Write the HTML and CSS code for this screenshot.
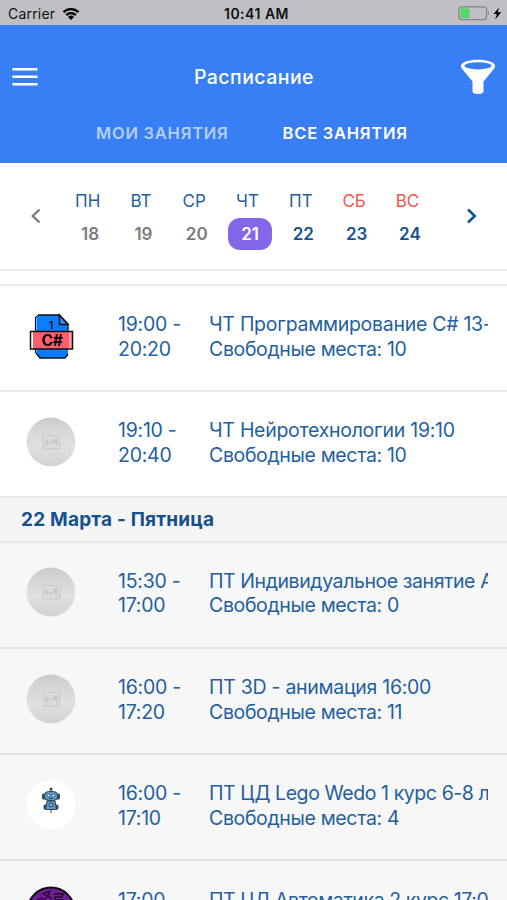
FILE: index.html
```
<!DOCTYPE html>
<html lang="ru">
<head>
    <meta charset="utf-8">
    <title>Расписание</title>
    <link rel="stylesheet" href="styles.css">
</head>
<body>
    <svg class="defs" width="0" height="0">
        <defs>
            <linearGradient id="grey" x1="0" y1="0" x2="0" y2="1">
                <stop offset="0" stop-color="#cbcbcb"/>
                <stop offset="0.25" stop-color="#d6d6d6"/>
                <stop offset="0.6" stop-color="#e0e0e0"/>
                <stop offset="1" stop-color="#d2d2d2"/>
            </linearGradient>
            <symbol id="no-photo" viewBox="0 0 50 50">
                <circle cx="25" cy="25" r="24.4" fill="url(#grey)"/>
                <rect x="17" y="18.500" width="17" height="13.500" fill="#dadada" stroke="#c9c9c9"/>
                <path d="M19.500 29.500v-8l3.500 3.500 3 .5 3-4h2.500v8l-3.500-4.500-3 2.500-2.500-2z" fill="#c6c6c6"/>
            </symbol>
        </defs>
    </svg>

    <div class="status">
        <div class="carrier">
            <span>Carrier</span>
            <svg width="18" height="14" viewBox="0 0 18 14">
                <path d="M1.500 5.200a10.800 10.800 0 0 1 15 0M4.200 8.100a6.800 6.800 0 0 1 9.600 0" fill="none" stroke="#000" stroke-width="2.300"/>
                <path d="M9 13l-3-3a4.400 4.400 0 0 1 6 0z"/>
            </svg>
        </div>
        <span class="clock">10:41 AM</span>
        <svg class="battery" width="44" height="16" viewBox="0 0 44 16">
            <rect x="0.800" y="0.800" width="27.800" height="12.800" rx="3" fill="none" stroke="#858588" stroke-width="1.300"/>
            <rect x="2.500" y="2.500" width="9" height="9.500" rx="1" fill="#4cd964"/>
            <path d="M30 5q2 2.200 0 4.400z" fill="#858588"/>
            <path d="M41 1.500l-5.500 6.500h3.300l-1.600 5.500 6-7.200h-3.500z"/>
        </svg>
    </div>

    <header class="header">
        <div class="bar">
            <svg class="burger" width="26" height="20" viewBox="0 0 26 20">
                <path d="M0.500 2.300h25M0.500 9.800h25M0.500 17.200h25" stroke="#fff" stroke-width="2.400"/>
            </svg>
            <h1>Расписание</h1>
            <svg class="funnel" width="36" height="36" viewBox="0 0 36 36">
                <path d="M1 7C1 3 8.500 0.700 18 0.700S35 3 35 7c0 1.300-.4 2-1 2.700L23.500 22.500v9.800q0 2.700-5.500 2.700t-5.500-2.700v-9.800L2 9.700C1.400 9 1 8.300 1 7z" fill="#fff"/>
                <ellipse cx="18" cy="6.800" rx="13.500" ry="3.600" fill="#387ef5"/>
            </svg>
        </div>
        <nav class="tabs">
            <a class="tab">МОИ ЗАНЯТИЯ</a>
            <a class="tab active">ВСЕ ЗАНЯТИЯ</a>
        </nav>
    </header>

    <section class="week">
        <svg class="prev" width="12" height="18" viewBox="0 0 12 18"><path d="M9.500 2.500L2.700 9l6.800 6.500" fill="none" stroke="#777" stroke-width="2.200"/></svg>
        <div class="days">
            <div class="day past"><span>ПН</span><b>18</b></div>
            <div class="day past"><span>ВТ</span><b>19</b></div>
            <div class="day past"><span>СР</span><b>20</b></div>
            <div class="day today"><span>ЧТ</span><b>21</b></div>
            <div class="day"><span>ПТ</span><b>22</b></div>
            <div class="day weekend"><span>СБ</span><b>23</b></div>
            <div class="day weekend"><span>ВС</span><b>24</b></div>
        </div>
        <svg class="next" width="12" height="18" viewBox="0 0 12 18"><path d="M2 2.500L8.800 9 2 15.500" fill="none" stroke="#16508f" stroke-width="2.500"/></svg>
    </section>

    <main class="list">
        <div class="item">
            <svg class="photo" viewBox="0 0 50 50">
                <path d="M9.500 42V6.500L12 4.500" fill="none" stroke="#111" stroke-width="1.200"/>
                <path d="M13 4h20l9 9v31l-3 3H14l-3.500-4V6z" fill="#0a7cff"/>
                <path d="M12 4h21l9 9v7M10 42l4 5h25l3-4" fill="none" stroke="#111" stroke-width="1.300"/>
                <path d="M33.500 4v9.500H42z" fill="#2b91ff" stroke="#111" stroke-width="1.500"/>
                <rect x="4.500" y="20.500" width="42" height="17.500" fill="#fff"/>
                <rect x="7" y="20.500" width="37" height="17.500" fill="#ff5f6d"/>
                <rect x="43" y="20.500" width="3.500" height="17.500" fill="#ff9aa2"/>
                <rect x="4.500" y="20.500" width="42" height="17.500" fill="none" stroke="#111" stroke-width="1.500"/>
                <text x="25" y="17.500" class="file-num">1</text>
                <text x="26" y="35" class="file-lang">C#</text>
            </svg>
            <div class="time">19:00 -<br>20:20</div>
            <div class="info"><div class="name">ЧТ Программирование C# 13-</div>Свободные места: 10</div>
        </div>
        <div class="item">
            <svg class="photo"><use href="#no-photo"/></svg>
            <div class="time">19:10 -<br>20:40</div>
            <div class="info"><div class="name">ЧТ Нейротехнологии 19:10</div>Свободные места: 10</div>
        </div>
        <h2>22 Марта - Пятница</h2>
        <div class="item grey">
            <svg class="photo"><use href="#no-photo"/></svg>
            <div class="time">15:30 -<br>17:00</div>
            <div class="info"><div class="name long">ПТ Индивидуальное занятие А</div>Свободные места: 0</div>
        </div>
        <div class="item grey">
            <svg class="photo"><use href="#no-photo"/></svg>
            <div class="time">16:00 -<br>17:20</div>
            <div class="info"><div class="name">ПТ 3D - анимация 16:00</div>Свободные места: 11</div>
        </div>
        <div class="item grey">
            <svg class="photo" viewBox="0 0 50 50">
                <circle cx="25" cy="25" r="24.500" fill="#fff"/>
                <path d="M25 8v5M25 29v4" stroke="#777" stroke-width="1.300"/>
                <circle cx="25" cy="9" r="1.500" fill="#4a4038"/>
                <rect x="16" y="13.500" width="4" height="6" rx="1.500" fill="#344b5e"/>
                <rect x="30" y="13.500" width="4" height="6" rx="1.500" fill="#344b5e"/>
                <rect x="18.500" y="11.500" width="13" height="9" rx="4" fill="#5c9cc8" stroke="#2f4558"/>
                <circle cx="22.500" cy="15.500" r="1.500" fill="#cceaff" stroke="#2f4558" stroke-width=".7"/>
                <circle cx="27.500" cy="15.500" r="1.500" fill="#cceaff" stroke="#2f4558" stroke-width=".7"/>
                <path d="M23 18.500h4" stroke="#2f4558"/>
                <rect x="17.500" y="24.500" width="4" height="5" rx="1.500" fill="#344b5e"/>
                <rect x="28.500" y="24.500" width="4" height="5" rx="1.500" fill="#344b5e"/>
                <path d="M21 21h8l1.500 8.500h-11z" fill="#5c9cc8" stroke="#2f4558"/>
                <circle cx="25" cy="25" r="2" fill="#7dbbe3" stroke="#2f4558"/>
            </svg>
            <div class="time">16:00 -<br>17:10</div>
            <div class="info"><div class="name long">ПТ ЦД Lego Wedo 1 курс 6-8 л</div>Свободные места: 4</div>
        </div>
        <div class="item grey">
            <svg class="photo" viewBox="0 0 50 50">
                <circle cx="25" cy="25" r="23.500" fill="#6f1e96" stroke="#111" stroke-width="2"/>
                <path d="M10 15l5-3 3 2 4-4-5-2 7-3-2 5 4 3M28 8h9l-1 3h-7v3h9" fill="none" stroke="#26082f" stroke-width="1.300"/>
            </svg>
            <div class="time">17:00 -<br>18:30</div>
            <div class="info"><div class="name long">ПТ ЦД Автоматика 2 курс 17:00</div>Свободные места: 5</div>
        </div>
    </main>
</body>
</html>
```

FILE: styles.css
```
* {
    box-sizing: border-box;
}

body {
    margin: 0;
    height: 900px;
    overflow: hidden;
    font-family: Inter, "Noto Sans", sans-serif;
    background: #fff;
    color: #245f9f;
}

.defs {
    display: block;
}

.status {
    display: grid;
    grid-template-columns: 1fr auto 1fr;
    align-items: center;
    height: 25px;
    padding: 2px 5px 0 8px;
    background: #bfbfc4;
    color: #111;
    font-size: 14px;
}

.carrier {
    display: flex;
    align-items: center;
    gap: 7px;
    letter-spacing: 0.2px;
}

.clock {
    font-weight: 600;
    padding-left: 3px;
    letter-spacing: 0.5px;
}

.battery {
    justify-self: end;
}

.header {
    height: 138px;
    background: #387ef5;
    color: #fff;
}

.bar {
    display: flex;
    align-items: center;
    justify-content: space-between;
    height: 82px;
    padding: 21px 11px 0 12px;
}

h1 {
    margin: 0;
    padding-left: 10px;
    font-size: 19.5px;
    font-weight: 500;
    letter-spacing: 0.45px;
}

.tabs {
    display: flex;
    gap: 54px;
    padding: 15px 0 0 96px;
    font-size: 16.5px;
    line-height: 22px;
    font-weight: 600;
    letter-spacing: 0.75px;
    white-space: nowrap;
}

.tab {
    color: #b4cffb;
}

.tab.active {
    color: #fff;
}

.week {
    display: flex;
    align-items: flex-start;
    height: 108px;
    padding: 26px 0 0 30px;
    border-bottom: 2px solid #ededed;
}

.prev, .next {
    margin-top: 18px;
}

.days {
    display: grid;
    grid-template-columns: repeat(7, 53.3px);
    margin: 0 31px 0 20px;
}

.day {
    display: flex;
    flex-direction: column;
    align-items: center;
    font-size: 17px;
    line-height: 24px;
}

.day span {
    padding-right: 2px;
}

.day b {
    width: 44px;
    height: 32px;
    margin: 5px 0 0 3px;
    border-radius: 12px;
    line-height: 33px;
    text-align: center;
    font-weight: 600;
    color: #16508f;
}

.day.past b {
    color: #7b7b7b;
}

.day.today b {
    background: #8467e8;
    color: #fff;
}

.weekend span {
    color: #f4574c;
}

.list {
    margin-top: 12.5px;
    border-top: 2px solid #ebebeb;
}

.item {
    display: flex;
    align-items: center;
    height: 106.2px;
    padding: 0 0 4px 26px;
    border-bottom: 2px solid #e7e8e8;
    font-size: 19.5px;
    line-height: 24.5px;
    letter-spacing: -0.35px;
    white-space: nowrap;
}

.item.grey {
    padding-bottom: 5px;
    background: #f7f7f7;
    border-color: #e2e3e3;
}

.photo {
    flex: none;
    width: 50px;
    height: 50px;
}

.time {
    flex: none;
    width: 91px;
    margin-left: 42px;
    padding-top: 2px;
    letter-spacing: -0.25px;
}

.info {
    width: 279px;
    padding-top: 2px;
    overflow: hidden;
}

.name {
    letter-spacing: -0.28px;
}

.name.long {
    letter-spacing: -0.42px;
}

h2 {
    height: 45px;
    margin: 0;
    padding-left: 21px;
    border-bottom: 2px solid #e5e7e7;
    background: #f5f5f5;
    color: #16508f;
    font-size: 19px;
    line-height: 44px;
    font-weight: 700;
    letter-spacing: 0.2px;
}

.file-num {
    font-size: 10px;
    font-weight: 600;
    text-anchor: middle;
}

.file-lang {
    font-size: 15.5px;
    font-weight: 700;
    text-anchor: middle;
}
```
